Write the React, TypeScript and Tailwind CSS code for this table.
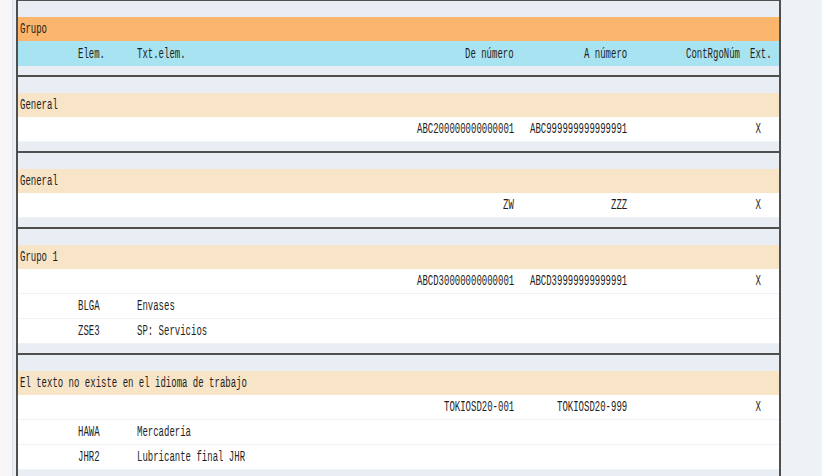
import type { ReactNode } from "react";

type Row = {
  elem?: string;
  txt?: string;
  from?: string;
  to?: string;
  cont?: string;
  ext?: string;
};

type Group = { title: string; rows: Row[] };

const groups: Group[] = [
  {
    title: "General",
    rows: [{ from: "ABC200000000000001", to: "ABC999999999999991", ext: "X" }],
  },
  {
    title: "General",
    rows: [{ from: "ZW", to: "ZZZ", ext: "X" }],
  },
  {
    title: "Grupo 1",
    rows: [
      { from: "ABCD30000000000001", to: "ABCD39999999999991", ext: "X" },
      { elem: "BLGA", txt: "Envases" },
      { elem: "ZSE3", txt: "SP: Servicios" },
    ],
  },
  {
    title: "El texto no existe en el idioma de trabajo",
    rows: [
      { from: "TOKIOSD20-001", to: "TOKIOSD20-999", ext: "X" },
      { elem: "HAWA", txt: "Mercadería" },
      { elem: "JHR2", txt: "Lubricante final JHR" },
    ],
  },
];

// SAP list font is a narrow courier, so squeeze a mono face horizontally
function T({ children, right }: { children?: ReactNode; right?: boolean }) {
  return (
    <span
      className={`inline-block shrink-0 whitespace-pre scale-x-[0.643] ${right ? "origin-right" : "origin-left"}`}
    >
      {children}
    </span>
  );
}

function Cells({ row }: { row: Row }) {
  return (
    <>
      <div className="w-[60px] shrink-0" />
      <div className="w-[59px] shrink-0 flex">
        <T>{row.elem}</T>
      </div>
      <div className="w-[273px] shrink-0 flex">
        <T>{row.txt}</T>
      </div>
      <div className="w-[104px] shrink-0 flex justify-end">
        <T right>{row.from}</T>
      </div>
      <div className="w-[113px] shrink-0 flex justify-end">
        <T right>{row.to}</T>
      </div>
      <div className="w-[113px] shrink-0 flex justify-end">
        <T right>{row.cont}</T>
      </div>
      <div className="flex-1 flex pl-[10px]">
        <T>{row.ext === "X" ? " X" : row.ext}</T>
      </div>
    </>
  );
}

export default function App() {
  return (
    <div className="w-[822px] h-[476px] overflow-hidden flex bg-white text-[14px] leading-none text-[#1e1e1e] font-['Courier_New','Liberation_Mono',monospace]">
      <div className="w-[12px] bg-[#f7f7f7]" />
      <div className="w-[4px] bg-[#edf0f5] border-l border-[#d9dce2]" />

      <div className="w-[765px] shrink-0 border-x-2 border-[#4f4f4f] bg-[#e9eef5]">
        <section className="border-t border-[#4f4f4f] pt-[16px] pb-[9px]">
          <div className="h-[24px] flex items-center pl-[2px] bg-[#fbb56c]">
            <T>Grupo</T>
          </div>
          <div className="h-[25px] flex items-center bg-[#a8e3f1]">
            <Cells row={{ elem: "Elem.", txt: "Txt.elem.", from: "De número", to: "A número", cont: "ContRgoNúm", ext: "Ext." }} />
          </div>
        </section>

        {groups.map((g, i) => (
          <section key={i} className="border-t-2 border-[#4f4f4f] pt-[16px] pb-[9px]">
            <div className="h-[24px] flex items-center pl-[2px] bg-[#f8e4c7]">
              <T>{g.title}</T>
            </div>
            {g.rows.map((r, j) => (
              <div key={j} className="h-[25px] flex items-center bg-white border-b border-[#eef1f5]">
                <Cells row={r} />
              </div>
            ))}
          </section>
        ))}
      </div>

      <div className="flex-1 bg-[#eef1f6]" />
    </div>
  );
}
